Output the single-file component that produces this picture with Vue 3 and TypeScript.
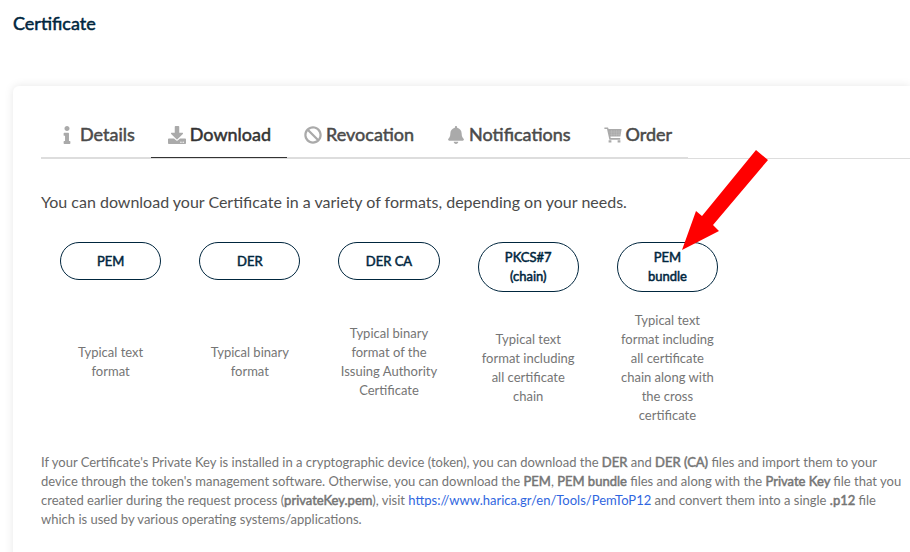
<script setup lang="ts">
import { ref } from 'vue'

interface Tab {
  id: string
  label: string
  viewBox: string
  path: string
}

interface Format {
  label: string
  description: string
}

const tabs: Tab[] = [
  {
    id: 'details',
    label: 'Details',
    viewBox: '-160 0 512 512',
    path: 'M20 424.229h20V279.771H20c-11.046 0-20-8.954-20-20V212c0-11.046 8.954-20 20-20h112c11.046 0 20 8.954 20 20v212.229h20c11.046 0 20 8.954 20 20V492c0 11.046-8.954 20-20 20H20c-11.046 0-20-8.954-20-20v-47.771c0-11.046 8.954-20 20-20zM96 0C56.235 0 24 32.235 24 72s32.235 72 72 72 72-32.235 72-72S135.764 0 96 0z',
  },
  {
    id: 'download',
    label: 'Download',
    viewBox: '0 0 512 512',
    path: 'M216 0h80c13.3 0 24 10.7 24 24v168h87.7c17.8 0 26.7 21.5 14.1 34.1L269.7 378.3c-7.5 7.5-19.8 7.5-27.3 0L90.1 226.1c-12.6-12.6-3.7-34.1 14.1-34.1H192V24c0-13.3 10.7-24 24-24zm296 376v112c0 13.3-10.7 24-24 24H24c-13.3 0-24-10.7-24-24V376c0-13.3 10.7-24 24-24h146.7l49 49c20.1 20.1 52.5 20.1 72.6 0l49-49H488c13.3 0 24 10.7 24 24zm-124 88c0-11-9-20-20-20s-20 9-20 20 9 20 20 20 20-9 20-20zm64 0c0-11-9-20-20-20s-20 9-20 20 9 20 20 20 20-9 20-20z',
  },
  {
    id: 'revocation',
    label: 'Revocation',
    viewBox: '0 0 512 512',
    path: 'M256 8C119.034 8 8 119.033 8 256s111.034 248 248 248 248-111.034 248-248S392.967 8 256 8zm130.108 117.892c65.448 65.448 70 165.481 20.677 235.637L150.47 105.216c70.204-49.356 170.226-44.735 235.638 20.676zM125.892 386.108c-65.448-65.448-70-165.481-20.677-235.637L361.53 406.784c-70.203 49.356-170.226 44.736-235.638-20.676z',
  },
  {
    id: 'notifications',
    label: 'Notifications',
    viewBox: '-32 0 512 512',
    path: 'M224 512c35.32 0 63.97-28.65 63.97-64H160.03c0 35.35 28.65 64 63.97 64zm215.39-149.71c-19.32-20.76-55.47-51.99-55.47-154.29 0-77.7-54.48-139.9-127.94-155.16V32c0-17.67-14.32-32-31.98-32s-31.98 14.33-31.98 32v20.84C118.56 68.1 64.08 130.3 64.08 208c0 102.3-36.15 133.53-55.47 154.29-6 6.45-8.66 14.16-8.61 21.71.11 16.4 12.98 32 32.1 32h383.8c19.12 0 32-15.6 32.1-32 .05-7.55-2.61-15.27-8.61-21.71z',
  },
  {
    id: 'order',
    label: 'Order',
    viewBox: '0 0 18 18',
    path: 'M.4 1.5H4L4.6 3H17.6L16.4 10.6H6.4L6.7 12H16.2V13.7H5.4L3 3H.4ZM4.6 14.3H7.4V16.6H4.6ZM13.6 14.3H16.4V16.6H13.6Z',
  },
]

const cartGrid = 'M7.6 4V10M10.1 4V10M12.6 4V10M15 4V10M5.4 6H17M5.8 8.3H16.6'

const formats: Format[] = [
  { label: 'PEM', description: 'Typical text format' },
  { label: 'DER', description: 'Typical binary format' },
  { label: 'DER CA', description: 'Typical binary format of the Issuing Authority Certificate' },
  { label: 'PKCS#7 (chain)', description: 'Typical text format including all certificate chain' },
  { label: 'PEM bundle', description: 'Typical text format including all certificate chain along with the cross certificate' },
]

const activeTab = ref('download')
</script>

<template>
  <main class="page">
    <h1 class="title">Certificate</h1>
    <section class="card">
      <div class="tab-bar">
        <div class="tabs" role="tablist">
          <button
            v-for="tab in tabs"
            :key="tab.id"
            type="button"
            role="tab"
            class="tab"
            :class="{ active: tab.id === activeTab }"
            :aria-selected="tab.id === activeTab"
            @click="activeTab = tab.id"
          >
            <svg class="tab-icon" :viewBox="tab.viewBox" aria-hidden="true">
              <path :d="tab.path" />
              <path v-if="tab.id === 'order'" class="cart-grid" :d="cartGrid" />
            </svg>
            <span>{{ tab.label }}</span>
          </button>
        </div>
      </div>

      <p class="intro">You can download your Certificate in a variety of formats, depending on your needs.</p>

      <div class="formats">
        <div v-for="(format, index) in formats" :key="format.label" class="format">
          <button type="button" class="pill">{{ format.label }}</button>
          <p class="description">{{ format.description }}</p>
          <svg v-if="index === formats.length - 1" class="pointer" viewBox="0 0 88 100" aria-hidden="true">
            <path d="M75 0L87 10L32 75L38 81L1 100L15 61L21 66Z" />
          </svg>
        </div>
      </div>

      <p class="note">
        If your Certificate's Private Key is installed in a cryptographic device (token), you can download the
        <strong>DER</strong> and <strong>DER (CA)</strong> files and import them to your device through the token's
        management software. Otherwise, you can download the <strong>PEM</strong>, <strong>PEM bundle</strong> files
        and along with the <strong>Private Key</strong> file that you created earlier during the request process
        (<strong>privateKey.pem</strong>), visit
        <a href="https://www.harica.gr/en/Tools/PemToP12">https://www.harica.gr/en/Tools/PemToP12</a> and convert them
        into a single <strong>.p12</strong> file which is used by various operating systems/applications.
      </p>
    </section>
  </main>
</template>

<style>
body {
  background: #fff;
}
</style>

<style scoped>
.page {
  padding: 11px 0 0 13px;
  overflow: hidden;
  font-family: Lato, 'Liberation Sans', sans-serif;
  color: #757575;
}

.title,
.tab,
.pill,
.note strong {
  font-weight: 400;
  -webkit-text-stroke: 0.5px currentColor;
}

.title {
  margin: 0 0 51px;
  font-size: 18px;
  line-height: 24px;
  color: #00263e;
}

.card {
  padding: 28px 0 40px 28px;
  border-radius: 6px 0 0 0;
  background: #fff;
  box-shadow: 0 0 10px rgba(0, 0, 0, 0.1);
}

.tab-bar {
  display: flex;
  border-bottom: 1px solid #ddd;
}

.tabs {
  display: flex;
  border-bottom: 1px solid #ddd;
}

.tab {
  display: flex;
  align-items: center;
  gap: 4px;
  margin-bottom: -1px;
  padding: 8px 16px 10px 17px;
  border: 0;
  border-bottom: 1px solid transparent;
  background: none;
  font-family: inherit;
  font-size: 18px;
  line-height: 25px;
  color: #4a4a4a;
  cursor: pointer;
}

.tab.active {
  border-bottom-color: #333;
  color: #333;
}

.tab-icon {
  width: 18px;
  height: 18px;
  fill: #aaa;
}

.cart-grid {
  fill: none;
  stroke: #c4c4c4;
  stroke-width: 0.4;
}

.intro {
  margin: 31px 0 28px;
  font-size: 16px;
  line-height: 24px;
  color: #4a4a4a;
}

.formats {
  display: grid;
  grid-template-columns: repeat(5, 1fr);
  max-width: 696px;
}

.format {
  position: relative;
  display: flex;
  flex-direction: column;
  padding: 0 19px;
}

.pill {
  min-height: 38px;
  padding: 5px 24px;
  border: 1px solid #00263e;
  border-radius: 25px;
  background: #fff;
  font-family: inherit;
  font-size: 13px;
  line-height: 19px;
  color: #00263e;
  cursor: pointer;
}

.description {
  display: flex;
  flex: 1;
  align-items: center;
  margin: 19px 0 0;
  font-size: 13px;
  line-height: 19px;
  text-align: center;
}

.pointer {
  position: absolute;
  top: -92px;
  left: 83px;
  width: 88px;
  height: 100px;
  fill: #f00;
}

.note {
  margin: 28px 4px 0 0;
  font-size: 13px;
  line-height: 19px;
}

.note a {
  color: #2f66e0;
  text-decoration: none;
}
</style>
